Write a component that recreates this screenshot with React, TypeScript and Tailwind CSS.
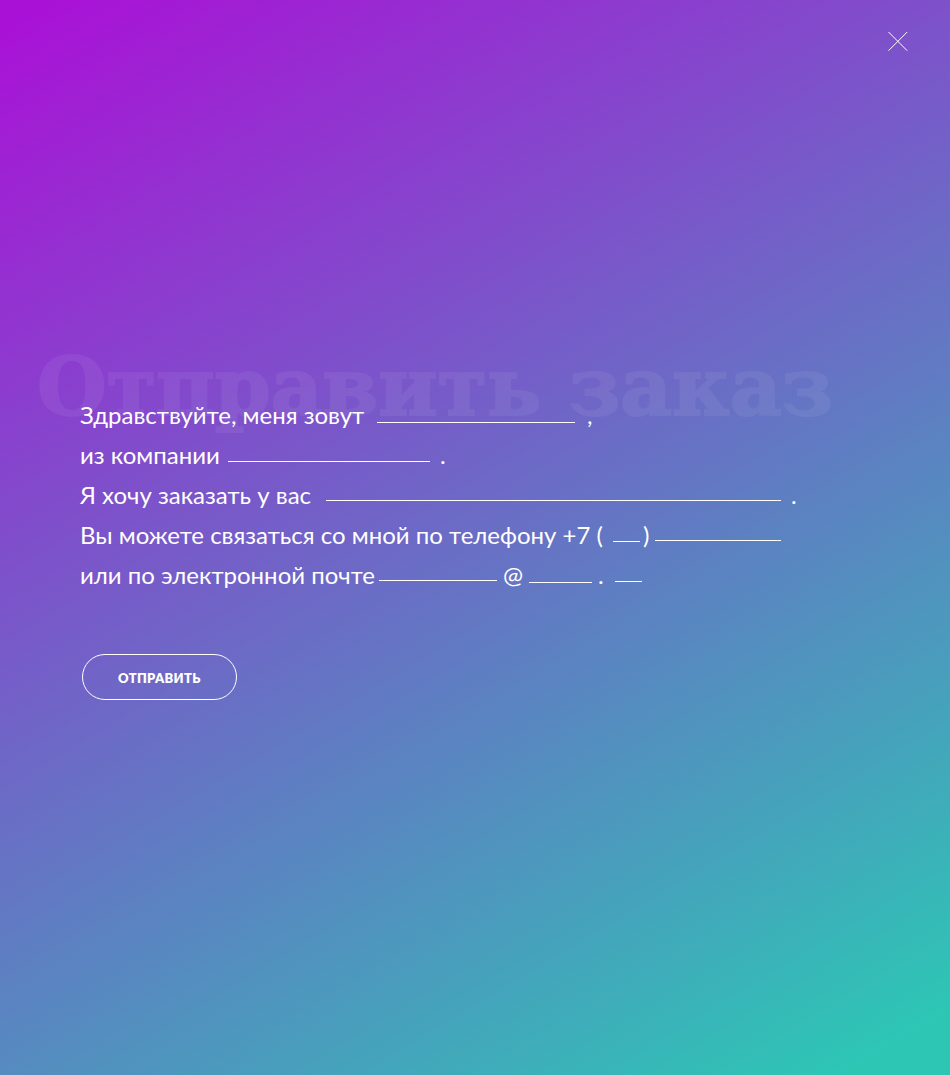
import { useState } from "react";
import type { InputHTMLAttributes, ReactNode } from "react";

function Blank({ className, ...rest }: InputHTMLAttributes<HTMLInputElement>) {
  return (
    <input
      {...rest}
      className={`min-w-0 border-b border-white bg-transparent text-[22px] text-white outline-none ${className ?? ""}`}
    />
  );
}

function Row({ children }: { children: ReactNode }) {
  return <div className="flex h-10 items-start whitespace-nowrap leading-10">{children}</div>;
}

export default function App() {
  const [open, setOpen] = useState(true);
  if (!open) return null;

  return (
    <div className="flex min-h-screen flex-col bg-linear-[149deg,#a912d6_2%,#2dc6b5_96%] font-['Lato','Open_Sans',sans-serif] text-white">
      <header className="flex justify-end px-[42px] pt-[31px]">
        <button type="button" aria-label="Закрыть" onClick={() => setOpen(false)} className="cursor-pointer">
          <svg width="20" height="20" viewBox="0 0 20 20" fill="none" stroke="currentColor" strokeWidth="1">
            <path d="M0.5 1 19.2 19.7M19.2 1 0.5 19.7" />
          </svg>
        </button>
      </header>

      <main className="relative mt-[344px] px-20 pb-20">
        <h1 className="pointer-events-none absolute -top-[58px] left-[37px] whitespace-nowrap font-['DejaVu_Serif',serif] text-[80px] leading-[100px] font-bold text-white opacity-6 [-webkit-text-stroke:2px_white]">
          Отправить заказ
        </h1>

        <form className="relative text-[24px]" onSubmit={(e) => e.preventDefault()}>
          <Row>
            <label htmlFor="name" className="w-[297px] shrink-0">Здравствуйте, меня зовут</label>
            <Blank id="name" name="name" className="h-7 w-[198px]" />
            <span className="ml-3">,</span>
          </Row>
          <Row>
            <label htmlFor="company" className="w-[148px] shrink-0">из компании</label>
            <Blank id="company" name="company" className="h-[27px] w-[202px]" />
            <span className="ml-2.5">.</span>
          </Row>
          <Row>
            <label htmlFor="order" className="w-[246px] shrink-0">Я хочу заказать у вас</label>
            <Blank id="order" name="order" className="h-[26px] w-[455px]" />
            <span className="ml-2.5">.</span>
          </Row>
          <Row>
            <label htmlFor="code" className="w-[533px] shrink-0">Вы можете связаться со мной по телефону +7 (</label>
            <Blank id="code" name="code" className="h-[27px] w-[27px]" />
            <label htmlFor="phone" className="w-[15px] shrink-0 pl-[3px]">)</label>
            <Blank id="phone" name="phone" type="tel" className="h-[26px] w-[126px]" />
          </Row>
          <Row>
            <label htmlFor="mailbox" className="w-[299px] shrink-0">или по электронной почте</label>
            <Blank id="mailbox" name="mailbox" className="h-[26px] w-[118px]" />
            <label htmlFor="domain" className="w-8 shrink-0 pl-1.5">@</label>
            <Blank id="domain" name="domain" className="h-7 w-[63px]" />
            <label htmlFor="zone" className="w-[23px] shrink-0 pl-1.5">.</label>
            <Blank id="zone" name="zone" className="h-[27px] w-[27px]" />
          </Row>

          <button
            type="submit"
            className="mt-[59px] ml-0.5 h-[46px] cursor-pointer rounded-full border border-white px-[35px] pt-1 text-[13px] font-extrabold tracking-wide uppercase"
          >
            Отправить
          </button>
        </form>
      </main>
    </div>
  );
}
